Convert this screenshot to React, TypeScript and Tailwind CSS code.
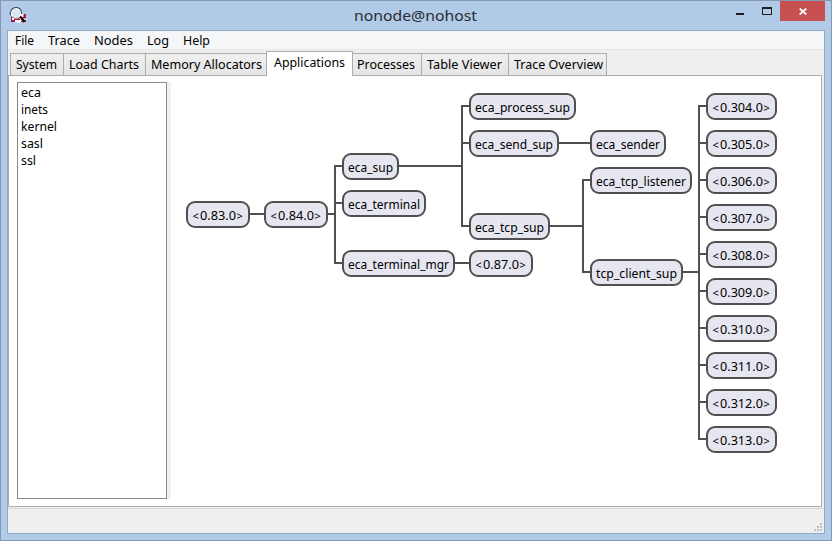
const FONT = "font-['Noto_Sans','Open_Sans',sans-serif]";

type Item = { label: string; box: string; text: number };

const menus = [
  { label: 'File', left: 15, text: 19 },
  { label: 'Trace', left: 48, text: 32 },
  { label: 'Nodes', left: 94, text: 39 },
  { label: 'Log', left: 147, text: 22 },
  { label: 'Help', left: 183, text: 27 },
];

const tabs: Item[] = [
  { label: 'System', box: 'w-[54px] pl-[5px]', text: 41 },
  { label: 'Load Charts', box: 'w-[83px] pl-[5px]', text: 70 },
  { label: 'Memory Allocators', box: 'w-[122px] pl-[5px]', text: 111 },
  { label: 'Applications', box: 'w-[87px] pl-[7px]', text: 71 },
  { label: 'Processes', box: 'w-[70px] pl-[4px]', text: 58 },
  { label: 'Table Viewer', box: 'w-[88px] pl-[5px]', text: 75 },
  { label: 'Trace Overview', box: 'w-[99px] pl-[5px]', text: 89 },
];

const nodes: [string, number, number, number][] = [
  ['<0.83.0>', 186, 201, 64],
  ['<0.84.0>', 264, 201, 64],
  ['eca_sup', 342, 153, 57],
  ['eca_terminal', 342, 190, 84],
  ['eca_terminal_mgr', 342, 250, 113],
  ['eca_process_sup', 469, 93, 107],
  ['eca_send_sup', 469, 130, 90],
  ['eca_tcp_sup', 469, 213, 81],
  ['<0.87.0>', 469, 250, 64],
  ['eca_sender', 590, 130, 76],
  ['eca_tcp_listener', 590, 167, 102],
  ['tcp_client_sup', 590, 259, 93],
  ...Array.from({ length: 10 }, (_, i): [string, number, number, number] => [
    `<0.${304 + i}.0>`, 706, 93 + 37 * i, 71,
  ]),
];

const links = [
  'M250 214H264M328 214H335M342 166H335V263H342M335 203H342',
  'M399 166H462M469 106H462V226H469M462 143H469M455 263H469M559 143H590',
  'M550 226H583M590 180H583V272H590M683 272H699M706 106H699V439H706',
  ...Array.from({ length: 8 }, (_, i) => `M699 ${143 + 37 * i}H706`),
].join('');

/* One line of text fitted to its measured width. */
function Label({ text, width, size = 12, fill = '#000' }: { text: string; width: number; size?: number; fill?: string }) {
  return (
    <svg width={width + 2} height="18" className="block shrink-0 overflow-visible">
      <text x="0" y="13" fontSize={size} fill={fill} textLength={width} lengthAdjust="spacingAndGlyphs">{text}</text>
    </svg>
  );
}

function AppIcon() {
  return (
    <svg width="18" height="18" viewBox="0 0 18 18" className="block">
      <path d="M2 8h15v8H2z" fill="#a9174a" />
      <path d="M6 14h6v2.500H6zM12 8h2.500v3H12zM14 12.500h3v1.500h-3zM3 12h2v2H3z" fill="#fff" />
      <circle cx="7" cy="7" r="5" fill="#dce8f3" stroke="#fff" strokeWidth="1.500" />
      <path d="M1.500 9.500Q.5 5 3.500 2.700 7 .3 10.500 2.500 13 4.500 12.300 8" fill="none" stroke="#34465e" strokeWidth="1.100" />
      <path d="M3 10.500q3 3 7 1" fill="none" stroke="#a9a9b8" />
      <path d="m11 10.500 4.500 5.300" stroke="#111" strokeWidth="2.600" />
      <path d="m10 11.500 2.500 3" stroke="#fff" strokeWidth="1" />
    </svg>
  );
}

export default function App() {
  return (
    <div className={`flex h-[541px] w-[832px] flex-col overflow-hidden border border-[#8499b4] bg-[#b0cae7] ${FONT}`}>
      <header className="flex h-[29px] shrink-0 items-start">
        <div className="ml-[8px] mt-[5px] w-[345px]"><AppIcon /></div>
        <div className="mt-[7px] w-[375px]">
          <Label text="nonode@nohost" width={123} size={14.5} fill="#292d34" />
        </div>
        <div className="ml-[7px] mt-[12px] h-[2px] w-[8px] bg-[#1c1f24]" />
        <div className="ml-[18px] mt-[6px] h-[8px] w-[10px] border border-t-2 border-[#222]" />
        <div className="ml-[8px] flex h-[20px] w-[45px] items-center justify-center bg-[#c75050] pl-[1px] pt-[1px]">
          <svg width="8" height="7" viewBox="0 0 8 7"><path d="m.7.5 6.600 6M7.300.5.7 6.500" stroke="#fff" strokeWidth="1.700" /></svg>
        </div>
      </header>
      <main className="ml-[6px] flex h-[504px] w-[818px] shrink-0 flex-col border border-[#91aac7] bg-[#efefef]">
        <nav className="flex h-[19px] shrink-0 border-b border-[#e7e7e7] bg-[#f5f6f7] pl-[7px]">
          {menus.map((m, i) => (
            <div key={m.label} className="pt-[1px]" style={{ width: (menus[i + 1]?.left ?? 220) - m.left }}>
              <Label text={m.label} width={m.text} />
            </div>
          ))}
        </nav>
        <div className="z-10 -mb-px flex h-[26px] shrink-0 items-end pl-[2px]">
          {tabs.map((t) => t.label === 'Applications' ? (
            <div key={t.label} className={`${t.box} z-10 -mr-px h-[25px] border border-b-0 border-[#acacac] bg-white pt-[2px]`}>
              <Label text={t.label} width={t.text} />
            </div>
          ) : (
            <div key={t.label} className={`${t.box} -mr-px h-[23px] border border-[#acacac] bg-linear-to-b from-[#f0f0f0] to-[#e4e4e4] pt-[2px]`}>
              <Label text={t.label} width={t.text} />
            </div>
          ))}
        </div>
        <section className="relative flex h-[432px] w-[814px] shrink-0 border border-[#acacac] bg-white pl-[8px] pt-[6px]">
          <ul className="h-[417px] w-[150px] border border-[#828790] pl-[3px] pt-[1px]">
            {[['eca', 20], ['inets', 27], ['kernel', 36], ['sasl', 22], ['ssl', 15]].map(([name, width]) => (
              <li key={name} className="h-[17px]"><Label text={String(name)} width={Number(width)} /></li>
            ))}
          </ul>
          <div className="h-[417px] w-[4px] bg-[#f0f0f0]" />
          <svg className="absolute left-[162px] top-0" width="650" height="430" viewBox="171 76 650 430">
            <path d={links} fill="none" stroke="#505050" strokeWidth="2" />
            {nodes.map(([name, x, y, w]) => {
              const pid = name.startsWith('<');
              const digits = name.slice(1, -1);
              return (
                <g key={name}>
                  <rect x={x + 1} y={y + 1} width={w - 2} height="25" rx="8" fill="#e6e6f0" stroke="#505050" strokeWidth="2" />
                  {pid ? (
                    <>
                      <text x={x + 6.5} y={y + 18.500} fontSize="11">&lt;</text>
                      <text x={x + 14} y={y + 19} fontSize="12" textLength={w - 28} lengthAdjust="spacingAndGlyphs">{digits}</text>
                      <text x={x + w - 13.500} y={y + 18.500} fontSize="11">&gt;</text>
                    </>
                  ) : (
                    <text x={x + 6} y={y + 19} fontSize="12" textLength={w - 12} lengthAdjust="spacingAndGlyphs">{name}</text>
                  )}
                </g>
              );
            })}
          </svg>
        </section>
        <div className="mt-[1px] flex grow items-end justify-end border-t border-[#d7d7d7] pb-[2px] pr-[2px]">
          <svg width="8" height="8" viewBox="0 0 8 8" fill="#bfbfbf">
            <path d="M6 0h2v2H6zM3 3h2v2H3zM6 3h2v2H6zM0 6h2v2H0zM3 6h2v2H3zM6 6h2v2H6z" />
          </svg>
        </div>
      </main>
    </div>
  );
}
